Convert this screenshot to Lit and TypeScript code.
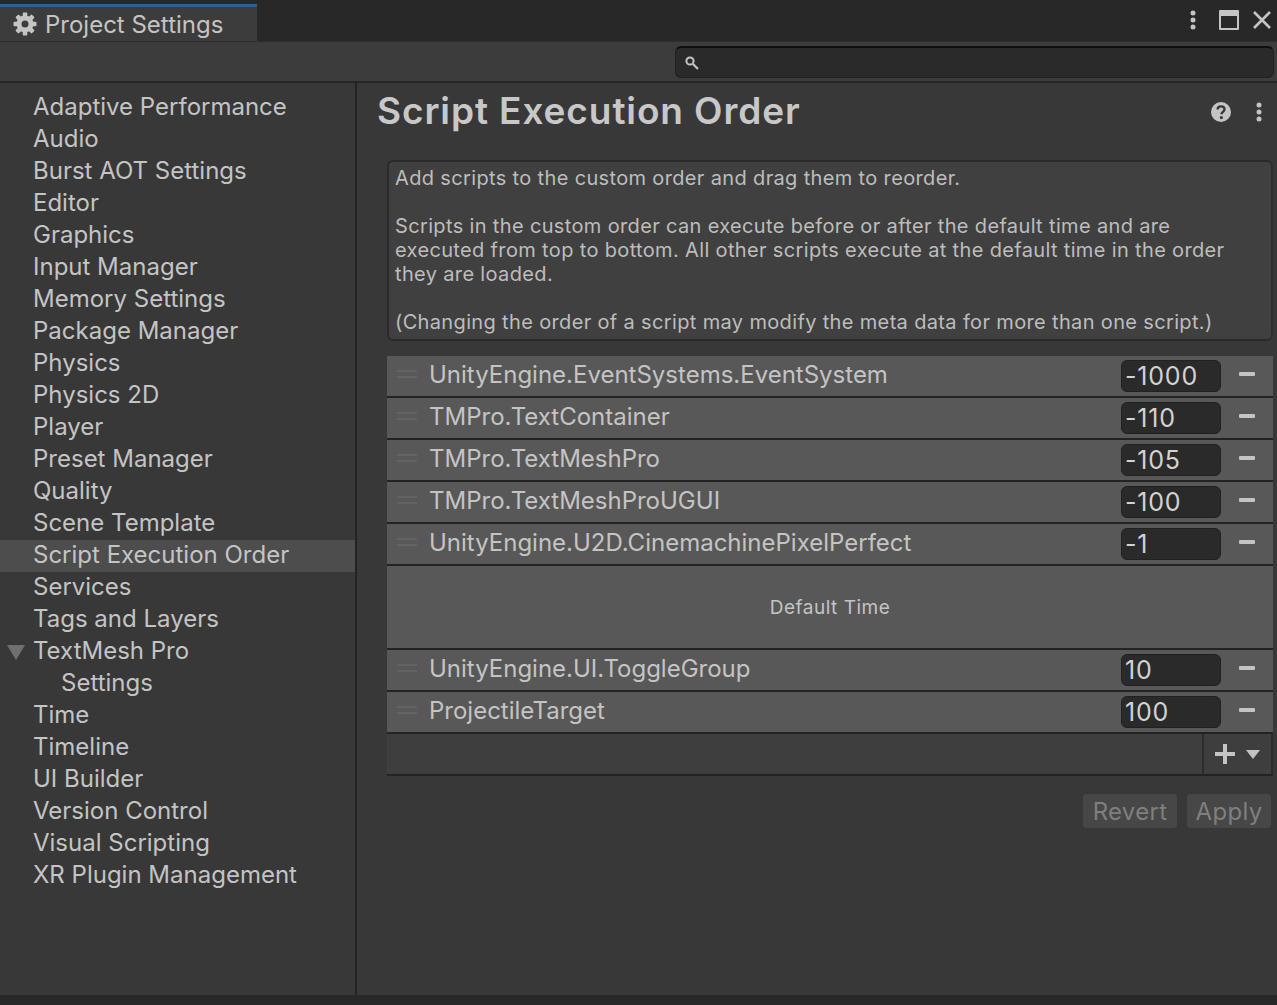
import { LitElement, html, css, svg } from "lit";
import { customElement } from "lit/decorators.js";

const SECTIONS = [
  "Adaptive Performance", "Audio", "Burst AOT Settings", "Editor", "Graphics", "Input Manager",
  "Memory Settings", "Package Manager", "Physics", "Physics 2D", "Player", "Preset Manager",
  "Quality", "Scene Template", "Script Execution Order", "Services", "Tags and Layers",
  "TextMesh Pro", "Settings", "Time", "Timeline", "UI Builder", "Version Control",
  "Visual Scripting", "XR Plugin Management",
];

const BEFORE = [
  ["UnityEngine.EventSystems.EventSystem", "-1000"],
  ["TMPro.TextContainer", "-110"],
  ["TMPro.TextMeshPro", "-105"],
  ["TMPro.TextMeshProUGUI", "-100"],
  ["UnityEngine.U2D.CinemachinePixelPerfect", "-1"],
];

const AFTER = [
  ["UnityEngine.UI.ToggleGroup", "10"],
  ["ProjectileTarget", "100"],
];

const dots = html`<svg class="dots" width="6" height="20" viewBox="0 0 6 20">
  <circle cx="3" cy="3" r="2.5"></circle><circle cx="3" cy="10" r="2.5"></circle><circle cx="3" cy="17" r="2.5"></circle>
</svg>`;

const gearTeeth = [0, 45, 90, 135, 180, 225, 270, 315].map(
  (a) => svg`<rect x="9.7" y="0.5" width="4.6" height="6" rx="1" transform="rotate(${a} 12 12)"></rect>`
);

@customElement("app-root")
export class AppRoot extends LitElement {
  static styles = css`
    :host {
      display: flex;
      flex-direction: column;
      width: 1277px;
      height: 1005px;
      overflow: hidden;
      background: #383838;
      color: #c4c4c4;
      font-family: Inter, "Noto Sans", sans-serif;
    }
    .tabbar {
      display: flex;
      justify-content: space-between;
      height: 41px;
      flex: none;
      background: #282828;
      box-sizing: border-box;
    }
    .tab {
      display: flex;
      align-items: center;
      gap: 8px;
      box-sizing: border-box;
      width: 257px;
      margin-top: 4px;
      height: 37px;
      padding: 0 0 0 13px;
      background: #3c3c3c;
      border-top: 3px solid #2f5f8c;
      font-size: 24px;
      color: #c4c4c4;
    }
    .tab svg { fill: #c4c4c4; flex: none; }
    .window-buttons {
      display: flex;
      align-items: center;
      padding: 0 6px 0 0;
      height: 40px;
    }
    .dots { fill: #c4c4c4; display: block; }
    .window-buttons .dots { margin-right: 23px; }
    .window-buttons .max { margin-right: 14px; display: block; }
    .window-buttons .close { display: block; }
    .toolbar {
      display: flex;
      justify-content: flex-end;
      box-sizing: border-box;
      height: 42px;
      flex: none;
      padding: 4px 3px 0 0;
      background: #3c3c3c;
      border-top: 1px solid #2e2e2e;
      border-bottom: 2px solid #252525;
    }
    .search {
      display: flex;
      align-items: center;
      box-sizing: border-box;
      width: 599px;
      height: 32px;
      padding-left: 9px;
      background: #2a2a2a;
      border: 1px solid #212121;
      border-top: 2px solid #0f0f0f;
      border-radius: 6px;
    }
    .body {
      display: flex;
      flex: 1;
      min-height: 0;
    }
    .sidebar {
      box-sizing: border-box;
      width: 357px;
      flex: none;
      padding-top: 9px;
      border-right: 2px solid #232323;
    }
    .item {
      position: relative;
      height: 32px;
      line-height: 29px;
      padding-left: 33px;
      font-size: 24px;
      white-space: nowrap;
    }
    .item.child { padding-left: 61px; }
    .item.selected { background: #4d4d4d; }
    .arrow {
      position: absolute;
      left: 7px;
      top: 9px;
      width: 0;
      height: 0;
      border-left: 9px solid transparent;
      border-right: 9px solid transparent;
      border-top: 15px solid #6f6f6f;
    }
    .content {
      flex: 1;
      min-width: 0;
      box-sizing: border-box;
      padding: 0 4px 0 30px;
    }
    .title {
      display: flex;
      align-items: center;
      height: 77px;
      margin-left: -10px;
      padding-right: 11px;
      padding-bottom: 20px;
      box-sizing: border-box;
      font-size: 37px;
      font-weight: 600;
      letter-spacing: 0.9px;
      color: #c8c8c8;
    }
    .title h1 {
      flex: 1;
      margin: -3px 0 0;
      font: inherit;
    }
    .title .help { margin-right: 25px; display: block; }
    .help-box {
      box-sizing: border-box;
      height: 181px;
      padding: 4px 6px;
      background: #404040;
      border: 2px solid #2a2a2a;
      border-right-color: #2e2e2e;
      border-radius: 6px;
      font-size: 20px;
      line-height: 24px;
      letter-spacing: 0.35px;
      color: #bdbdbd;
      white-space: pre-line;
    }
    .list { margin-top: 15px; }
    .row {
      display: flex;
      align-items: center;
      box-sizing: border-box;
      height: 42px;
      padding-bottom: 4px;
      background: #585858;
      border-bottom: 2px solid #232323;
    }
    .grip {
      flex: none;
      box-sizing: border-box;
      width: 20px;
      height: 8px;
      margin: 0 12px 0 10px;
      border-top: 2px solid #636363;
      border-bottom: 2px solid #636363;
    }
    .name {
      flex: 1;
      font-size: 24px;
      color: #c4c4c4;
    }
    .order {
      box-sizing: border-box;
      width: 100px;
      height: 32px;
      line-height: 30px;
      margin-top: 4px;
      padding-left: 3px;
      background: #2a2a2a;
      border: 1px solid #212121;
      border-radius: 6px;
      font-size: 25px;
      letter-spacing: 0.8px;
      color: #d2d2d2;
    }
    .remove {
      flex: none;
      width: 16px;
      height: 4px;
      margin: 0 18px 0 18px;
      border-radius: 1px;
      background: #c4c4c4;
    }
    .default-time {
      display: flex;
      align-items: center;
      justify-content: center;
      box-sizing: border-box;
      height: 84px;
      padding-top: 1px;
      background: #585858;
      border-bottom: 2px solid #232323;
      font-size: 19px;
      letter-spacing: 0.5px;
      color: #c4c4c4;
    }
    .footer {
      display: flex;
      justify-content: flex-end;
      box-sizing: border-box;
      height: 42px;
      background: #3e3e3e;
      border-bottom: 2px solid #232323;
    }
    .add {
      display: flex;
      align-items: center;
      box-sizing: border-box;
      width: 71px;
      padding-left: 11px;
      gap: 11px;
      border-left: 2px solid #2c2c2c;
      border-right: 2px solid #2c2c2c;
    }
    .add svg { fill: #c4c4c4; display: block; }
    .actions {
      display: flex;
      justify-content: flex-end;
      gap: 10px;
      margin-top: 18px;
      padding-right: 2px;
    }
    .actions div {
      box-sizing: border-box;
      height: 34px;
      line-height: 36px;
      text-align: center;
      background: #474747;
      border-radius: 4px;
      font-size: 24px;
      letter-spacing: 0.3px;
      color: #7f7f7f;
    }
    .revert { width: 94px; }
    .apply { width: 84px; }
    .status {
      height: 10px;
      flex: none;
      background: #282828;
    }
  `;

  private renderRow([name, order]: string[]) {
    return html`<div class="row">
      <div class="grip"></div>
      <div class="name">${name}</div>
      <div class="order">${order}</div>
      <div class="remove"></div>
    </div>`;
  }

  render() {
    return html`
      <div class="tabbar">
        <div class="tab">
          <svg width="24" height="24" viewBox="0 0 24 24">
            ${gearTeeth}
            <path fill-rule="evenodd" d="M12 3.5a8.5 8.5 0 1 0 0 17 8.5 8.5 0 0 0 0-17zm0 5a3.5 3.5 0 1 1 0 7 3.5 3.5 0 0 1 0-7z"></path>
          </svg>
          Project Settings
        </div>
        <div class="window-buttons">
          ${dots}
          <svg class="max" width="20" height="20" viewBox="0 0 20 20">
            <path fill="#c4c4c4" d="M1 0h18a1 1 0 0 1 1 1v18a1 1 0 0 1-1 1H1a1 1 0 0 1-1-1V1a1 1 0 0 1 1-1zm1 6v12h16V6z"></path>
          </svg>
          <svg class="close" width="18" height="18" viewBox="0 0 18 18">
            <path stroke="#c4c4c4" stroke-width="2.6" d="M1 1l16 16M17 1L1 17"></path>
          </svg>
        </div>
      </div>
      <div class="toolbar">
        <div class="search">
          <svg width="14" height="14" viewBox="0 0 14 14" fill="none" stroke="#c4c4c4">
            <circle cx="5" cy="5" r="3.6" stroke-width="2"></circle>
            <path d="M8 8l5 5" stroke-width="2.2"></path>
          </svg>
        </div>
      </div>
      <div class="body">
        <div class="sidebar">
          ${SECTIONS.map((s) => html`<div class="item ${s === "Settings" ? "child" : ""} ${s === "Script Execution Order" ? "selected" : ""}">
            ${s === "TextMesh Pro" ? html`<span class="arrow"></span>` : ""}${s}
          </div>`)}
        </div>
        <div class="content">
          <div class="title">
            <h1>Script Execution Order</h1>
            <svg class="help" width="20" height="20" viewBox="0 0 20 20">
              <circle cx="10" cy="10" r="10" fill="#c4c4c4"></circle>
              <path d="M6.6 7.6c0-2 1.5-3.2 3.5-3.2s3.4 1.1 3.4 2.9c0 2.6-3 2.6-3 5" fill="none" stroke="#383838" stroke-width="2.4"></path>
              <circle cx="10.4" cy="15.6" r="1.6" fill="#383838"></circle>
            </svg>
            ${dots}
          </div>
          <div class="help-box">Add scripts to the custom order and drag them to reorder.

Scripts in the custom order can execute before or after the default time and are
executed from top to bottom. All other scripts execute at the default time in the order
they are loaded.

(Changing the order of a script may modify the meta data for more than one script.)</div>
          <div class="list">
            ${BEFORE.map((r) => this.renderRow(r))}
            <div class="default-time">Default Time</div>
            ${AFTER.map((r) => this.renderRow(r))}
            <div class="footer">
              <div class="add">
                <svg width="20" height="20" viewBox="0 0 20 20">
                  <path d="M8 0h4v8h8v4h-8v8H8v-8H0V8h8z"></path>
                </svg>
                <svg width="14" height="9" viewBox="0 0 14 9"><path d="M0 0h14L7 9z"></path></svg>
              </div>
            </div>
          </div>
          <div class="actions">
            <div class="revert">Revert</div>
            <div class="apply">Apply</div>
          </div>
        </div>
      </div>
      <div class="status"></div>
    `;
  }
}
